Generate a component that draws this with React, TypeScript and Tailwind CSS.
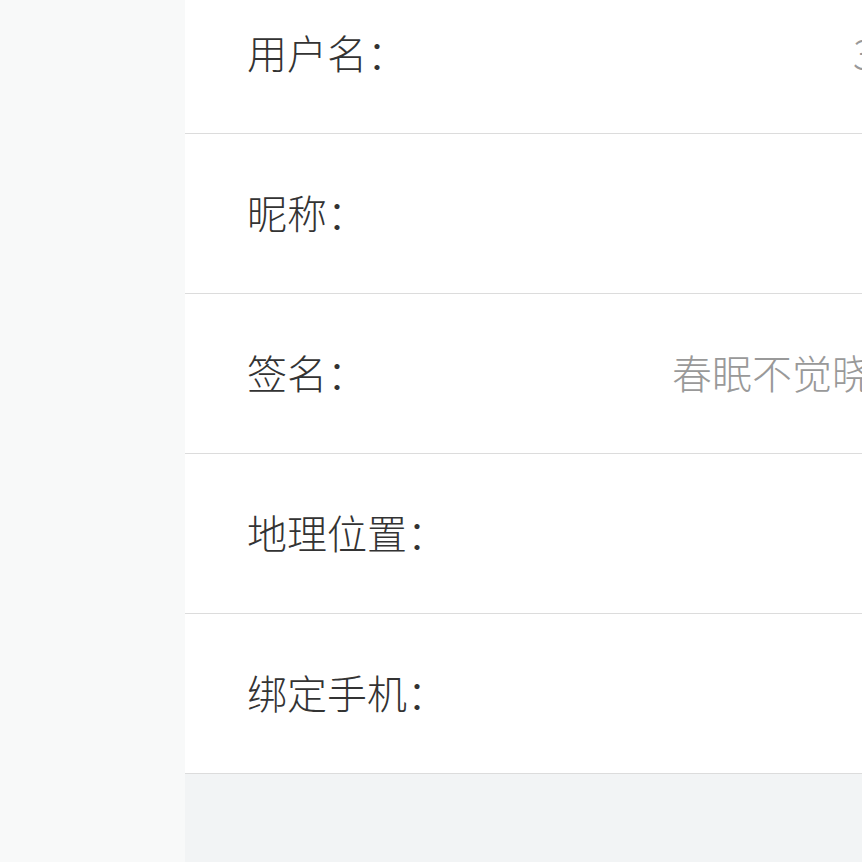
import React from "react";

const rows: { label: string; value: string; valueClass: string }[] = [
  { label: "用户名：", value: "3307281", valueClass: "ml-[668px]" },
  { label: "昵称：", value: "", valueClass: "" },
  { label: "签名：", value: "春眠不觉晓，处处闻啼鸟", valueClass: "ml-[487px]" },
  { label: "地理位置：", value: "", valueClass: "" },
  { label: "绑定手机：", value: "", valueClass: "" },
];

export default function App() {
  return (
    <div
      className="flex w-[862px] h-[862px] overflow-hidden"
      style={{ fontFamily: '"Noto Sans CJK SC", "Noto Sans", sans-serif' }}
    >
      <div className="w-[185px] shrink-0 bg-[#f8f9f9]" />
      <div className="flex-1 min-w-0 flex flex-col bg-[#f2f4f5] overflow-hidden">
        <div className="-mt-[26px] bg-white">
          {rows.map((r) => (
            <div
              key={r.label}
              className="relative h-[160px] border-b border-[#dcdcdc] flex items-center pl-[62px] pb-[3px] whitespace-nowrap"
            >
              <span className="text-[40px] leading-none font-light text-[#333333]">{r.label}</span>
              {r.value && (
                <span
                  className={`absolute left-0 top-0 h-full flex items-center pb-[3px] text-[40px] leading-none font-light text-[#999999] ${r.valueClass}`}
                >
                  {r.value}
                </span>
              )}
            </div>
          ))}
        </div>
      </div>
    </div>
  );
}
